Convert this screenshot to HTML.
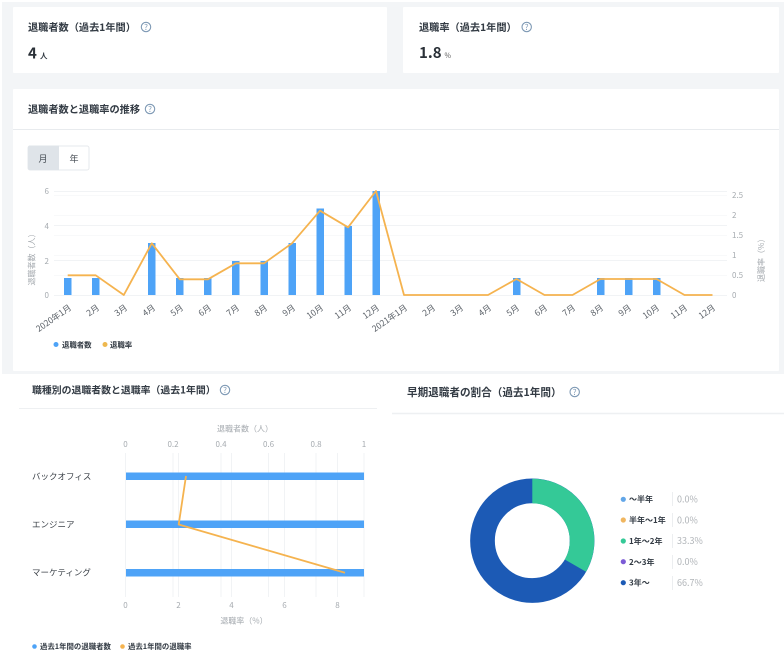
<!DOCTYPE html>
<html lang="ja">
<head>
<meta charset="utf-8">
<style>
html,body{margin:0;padding:0;background:#fff}
#r{position:relative;width:784px;height:659px;overflow:hidden;background:#fff}
svg{position:absolute;left:0;top:0;filter:blur(.3px)}
text{font-family:"Noto Sans CJK JP","Liberation Sans",sans-serif}
.t{font-size:10.2px;font-weight:700;fill:#333b44}
.a{font-size:8px;fill:#a6abb0}
.x{font-size:8.5px;fill:#5c6269}
.l{font-size:7.4px;font-weight:700;fill:#333b44}
.r{font-size:8px;font-weight:700;fill:#333b44}
.v{font-size:9px;fill:#b0b4b8}
.c{font-size:8.5px;fill:#3c4249}
.g{stroke:#f1f3f5;stroke-width:1}
.m{stroke:#f8f9fa;stroke-width:1}
</style>
</head>
<body>
<div id="r">
<svg width="784" height="659" viewBox="0 0 784 659">
<defs>
<g id="q"><circle cx="0" cy="0" r="4.700" fill="none" stroke="#7f9ab5" stroke-width="1.100"/><text x="0" y="2.800" text-anchor="middle" style="font-size:8px;fill:#7f9ab5">?</text></g>
</defs>
<rect x="2" y="2" width="782" height="372" fill="#f3f5f7"/>
<rect x="13" y="7" width="374" height="66" fill="#fff" rx="1"/>
<rect x="403" y="7" width="376" height="66" fill="#fff" rx="1"/>
<rect x="13" y="89" width="766" height="282" fill="#fff" rx="1"/>

<text class="t" x="28" y="31">退職者数（過去1年間）</text>
<use href="#q" x="146" y="27"/>
<text x="28" y="58.500" style="font-size:15px;font-weight:700;fill:#2b3138">4</text>
<text x="40" y="58.500" style="font-size:7.500px;font-weight:700;fill:#333b44">人</text>

<text class="t" x="419" y="31">退職率（過去1年間）</text>
<use href="#q" x="526.700" y="27"/>
<text x="419" y="58" style="font-size:15px;font-weight:700;fill:#2b3138">1.8</text>
<text x="444.500" y="58" style="font-size:7px;fill:#555">%</text>

<text class="t" x="28" y="113">退職者数と退職率の推移</text>
<use href="#q" x="150" y="109"/>
<line x1="13" y1="129.500" x2="779" y2="129.500" stroke="#e8ebee"/>

<rect x="28" y="146" width="61" height="24" rx="2" fill="#fff" stroke="#e6e9ec"/>
<path d="M30 145.500h29v24.500h-29a2 2 0 0 1-2-2v-20.500a2 2 0 0 1 2-2z" fill="#dfe4e9"/>
<text x="43" y="162" text-anchor="middle" style="font-size:9px;fill:#444b52">月</text>
<text x="74" y="162" text-anchor="middle" style="font-size:9px;fill:#444b52">年</text>

<g>
<line class="g" x1="54" x2="727" y1="191.500" y2="191.500"/>
<line class="m" x1="54" x2="727" y1="195.500" y2="195.500"/>
<line class="m" x1="54" x2="727" y1="215.500" y2="215.500"/>
<line class="g" x1="54" x2="727" y1="225.500" y2="225.500"/>
<line class="m" x1="54" x2="727" y1="235.500" y2="235.500"/>
<line class="g" x1="54" x2="727" y1="260.500" y2="260.500"/>
<line class="m" x1="54" x2="727" y1="255.500" y2="255.500"/>
<line class="m" x1="54" x2="727" y1="275.500" y2="275.500"/>
<line class="g" x1="54" x2="727" y1="295.500" y2="295.500"/>
</g>
<g fill="#4ea3f7">
<rect x="64" y="278" width="7.500" height="17"/>
<rect x="92" y="278" width="7.500" height="17"/>
<rect x="148" y="243" width="7.500" height="52"/>
<rect x="176" y="278" width="7.500" height="17"/>
<rect x="204" y="278" width="7.500" height="17"/>
<rect x="232" y="261" width="7.500" height="34"/>
<rect x="260.500" y="261" width="7.500" height="34"/>
<rect x="288.500" y="243" width="7.500" height="52"/>
<rect x="316.500" y="208.500" width="7.500" height="86.500"/>
<rect x="344.500" y="226" width="7.500" height="69"/>
<rect x="372.500" y="191" width="7.500" height="104"/>
<rect x="513" y="278" width="7.500" height="17"/>
<rect x="597" y="278" width="7.500" height="17"/>
<rect x="625" y="278" width="7.500" height="17"/>
<rect x="653" y="278" width="7.500" height="17"/>
</g>
<polyline fill="none" stroke="#f5b34f" stroke-width="1.800" stroke-linejoin="round" points="67.700,275.300 95.700,275.300 123.800,295 151.800,243.300 179.800,279.300 207.900,279.300 235.900,263.300 264,263.300 292,243.300 320,210.700 348.100,227.300 376,191 404,295 432,295 460,295 488,295 516.500,279 544.500,295 572.500,295 600.500,279 628.500,279 656.500,279 684.500,295 712.500,295"/>
<g class="a" text-anchor="end">
<text x="49" y="194">6</text><text x="49" y="229">4</text><text x="49" y="264">2</text><text x="49" y="298">0</text>
</g>
<g class="a">
<text x="732" y="198">2.5</text><text x="732" y="218">2</text><text x="732" y="238">1.5</text><text x="732" y="258">1</text><text x="732" y="278">0.5</text><text x="732" y="298">0</text>
</g>
<text class="a" transform="translate(34.500,285.500) rotate(-90)">退職者数（人）</text>
<text class="a" transform="translate(764,282) rotate(-90)">退職率（%）</text>
<g class="x" text-anchor="end">
<text transform="translate(72,309) rotate(-35)">2020年1月</text>
<text transform="translate(100,309) rotate(-35)">2月</text>
<text transform="translate(128,309) rotate(-35)">3月</text>
<text transform="translate(156,309) rotate(-35)">4月</text>
<text transform="translate(184,309) rotate(-35)">5月</text>
<text transform="translate(212,309) rotate(-35)">6月</text>
<text transform="translate(240,309) rotate(-35)">7月</text>
<text transform="translate(268,309) rotate(-35)">8月</text>
<text transform="translate(296,309) rotate(-35)">9月</text>
<text transform="translate(324,309) rotate(-35)">10月</text>
<text transform="translate(352,309) rotate(-35)">11月</text>
<text transform="translate(380,309) rotate(-35)">12月</text>
<text transform="translate(408,309) rotate(-35)">2021年1月</text>
<text transform="translate(436,309) rotate(-35)">2月</text>
<text transform="translate(464,309) rotate(-35)">3月</text>
<text transform="translate(492,309) rotate(-35)">4月</text>
<text transform="translate(520,309) rotate(-35)">5月</text>
<text transform="translate(548,309) rotate(-35)">6月</text>
<text transform="translate(576,309) rotate(-35)">7月</text>
<text transform="translate(604,309) rotate(-35)">8月</text>
<text transform="translate(632,309) rotate(-35)">9月</text>
<text transform="translate(660,309) rotate(-35)">10月</text>
<text transform="translate(688,309) rotate(-35)">11月</text>
<text transform="translate(716,309) rotate(-35)">12月</text>
</g>
<circle cx="56" cy="344.500" r="2.500" fill="#4ea3f7"/>
<text class="l" x="62" y="347.500">退職者数</text>
<circle cx="105" cy="344.500" r="2.500" fill="#eeb84f"/>
<text class="l" x="110" y="347.500">退職率</text>

<text class="t" x="32" y="393.500" style="font-size:9.900px">職種別の退職者数と退職率（過去1年間）</text>
<use href="#q" x="225" y="390"/>
<line x1="19" y1="408.500" x2="377" y2="408.500" stroke="#eef0f2"/>
<text class="a" x="245" y="431.500" text-anchor="middle">退職者数（人）</text>
<g class="a" text-anchor="middle">
<text x="125.500" y="447">0</text><text x="173" y="447">0.2</text><text x="221" y="447">0.4</text><text x="268.500" y="447">0.6</text><text x="316" y="447">0.8</text><text x="364" y="447">1</text>
<text x="125.500" y="608">0</text><text x="178.500" y="608">2</text><text x="231.500" y="608">4</text><text x="284.500" y="608">6</text><text x="337.500" y="608">8</text>
</g>
<g class="g">
<line x1="125.500" x2="125.500" y1="453" y2="597"/><line x1="173" x2="173" y1="453" y2="597"/><line x1="178.500" x2="178.500" y1="453" y2="597"/><line x1="221" x2="221" y1="453" y2="597"/><line x1="231.500" x2="231.500" y1="453" y2="597"/><line x1="268.500" x2="268.500" y1="453" y2="597"/><line x1="284.500" x2="284.500" y1="453" y2="597"/><line x1="316" x2="316" y1="453" y2="597"/><line x1="337.500" x2="337.500" y1="453" y2="597"/><line x1="364" x2="364" y1="453" y2="597"/>
</g>
<g fill="#4ea3f7">
<rect x="126" y="472.500" width="238" height="7.500"/>
<rect x="126" y="520.500" width="238" height="7.500"/>
<rect x="126" y="569" width="238" height="7.500"/>
</g>
<polyline fill="none" stroke="#f5b34f" stroke-width="1.800" stroke-linejoin="round" points="186,476 178.700,524.500 345,572.800"/>
<text class="c" x="32" y="479.500">バックオフィス</text>
<text class="c" x="32" y="527.500">エンジニア</text>
<text class="c" x="32" y="575.500">マーケティング</text>
<text class="a" x="244" y="623.500" text-anchor="middle">退職率（%）</text>
<circle cx="34.500" cy="646.500" r="2.300" fill="#4ea3f7"/>
<text class="l" x="40" y="649.200">過去1年間の退職者数</text>
<circle cx="122.500" cy="646.500" r="2.300" fill="#f5b34f"/>
<text class="l" x="128" y="649.200">過去1年間の退職率</text>

<text class="t" x="407" y="396" style="font-size:10.600px">早期退職者の割合（過去1年間）</text>
<use href="#q" x="574.700" y="392"/>
<line x1="392" y1="413.500" x2="784" y2="413.500" stroke="#eef0f2" stroke-width="1.500"/>
<circle cx="532.300" cy="540.700" r="49.800" fill="none" stroke="#1c5ab5" stroke-width="24.700"/>
<path d="M532.300 478.700A62 62 0 0 1 586 571.700L564.800 559.450A37.500 37.500 0 0 0 532.300 503.200Z" fill="#34c997"/>
<circle cx="623.300" cy="499.300" r="2.600" fill="#62a6e8"/>
<circle cx="623.300" cy="520" r="2.600" fill="#f0b660"/>
<circle cx="623.300" cy="541" r="2.600" fill="#34c997"/>
<circle cx="623.300" cy="561.700" r="2.600" fill="#7b5bd6"/>
<circle cx="623.300" cy="582.700" r="2.600" fill="#1c5ab5"/>
<text class="r" x="629" y="502.200">〜半年</text>
<text class="r" x="629" y="523">半年〜1年</text>
<text class="r" x="629" y="544">1年〜2年</text>
<text class="r" x="629" y="564.800">2〜3年</text>
<text class="r" x="629" y="585.700">3年〜</text>
<g stroke="#eceef0">
<line x1="672.500" x2="672.500" y1="492" y2="506"/>
<line x1="672.500" x2="672.500" y1="513" y2="527"/>
<line x1="672.500" x2="672.500" y1="534" y2="548"/>
<line x1="672.500" x2="672.500" y1="555" y2="569"/>
<line x1="672.500" x2="672.500" y1="576" y2="590"/>
</g>
<text class="v" x="677" y="502.500">0.0%</text>
<text class="v" x="677" y="523.300">0.0%</text>
<text class="v" x="677" y="544.200">33.3%</text>
<text class="v" x="677" y="565">0.0%</text>
<text class="v" x="677" y="586">66.7%</text>
</svg>
</div>
</body>
</html>
